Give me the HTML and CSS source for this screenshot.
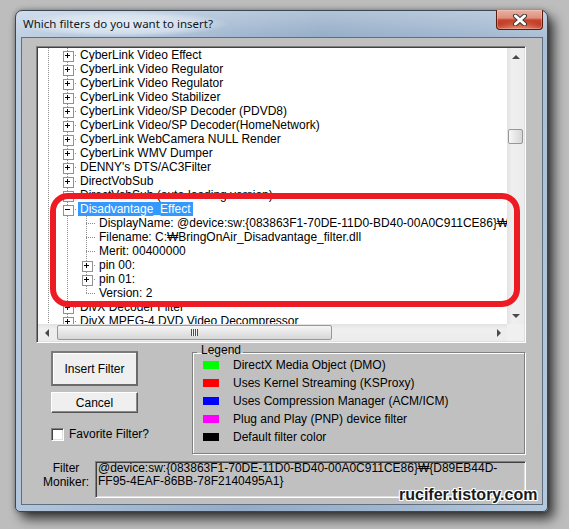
FILE: index.html
```html
<!DOCTYPE html>
<html>
<head>
<meta charset="utf-8">
<title>Which filters do you want to insert?</title>
<link rel="stylesheet" href="styles.css">
</head>
<body>
<div class="window">
  <div class="titlebar">
    <span class="title">Which filters do you want to insert?</span>
    <div class="close">
      <svg width="16" height="12" viewBox="0 0 16 12">
        <path d="M3.5 2 L12.5 10 M12.5 2 L3.5 10" stroke="#3a3a3a" stroke-width="5" stroke-linecap="round"/>
        <path d="M3.5 2 L12.5 10 M12.5 2 L3.5 10" stroke="#fff" stroke-width="3" stroke-linecap="round"/>
      </svg>
    </div>
  </div>
  <div class="client">
    <div class="tree">
      <div class="rows">
        <div class="row"><span class="c v"></span><span class="c t p"></span><span class="txt">CyberLink Video Effect</span></div>
        <div class="row"><span class="c v"></span><span class="c t p"></span><span class="txt">CyberLink Video Regulator</span></div>
        <div class="row"><span class="c v"></span><span class="c t p"></span><span class="txt">CyberLink Video Regulator</span></div>
        <div class="row"><span class="c v"></span><span class="c t p"></span><span class="txt">CyberLink Video Stabilizer</span></div>
        <div class="row"><span class="c v"></span><span class="c t p"></span><span class="txt">CyberLink Video/SP Decoder (PDVD8)</span></div>
        <div class="row"><span class="c v"></span><span class="c t p"></span><span class="txt">CyberLink Video/SP Decoder(HomeNetwork)</span></div>
        <div class="row"><span class="c v"></span><span class="c t p"></span><span class="txt">CyberLink WebCamera NULL Render</span></div>
        <div class="row"><span class="c v"></span><span class="c t p"></span><span class="txt">CyberLink WMV Dumper</span></div>
        <div class="row"><span class="c v"></span><span class="c t p"></span><span class="txt">DENNY's DTS/AC3Filter</span></div>
        <div class="row"><span class="c v"></span><span class="c t p"></span><span class="txt">DirectVobSub</span></div>
        <div class="row"><span class="c v"></span><span class="c t p"></span><span class="txt">DirectVobSub (auto-loading version)</span></div>
        <div class="row"><span class="c v"></span><span class="c t m"></span><span class="txt sel">Disadvantage_Effect</span></div>
        <div class="row"><span class="c v"></span><span class="c v"></span><span class="c t"></span><span class="txt">DisplayName: @device:sw:{083863F1-70DE-11D0-BD40-00A0C911CE86}₩{D89EB44D-FF95-4EAF-86BB-78F2140495A1}</span></div>
        <div class="row"><span class="c v"></span><span class="c v"></span><span class="c t"></span><span class="txt">Filename: C:₩BringOnAir_Disadvantage_filter.dll</span></div>
        <div class="row"><span class="c v"></span><span class="c v"></span><span class="c t"></span><span class="txt">Merit: 00400000</span></div>
        <div class="row"><span class="c v"></span><span class="c v"></span><span class="c t p"></span><span class="txt">pin 00:</span></div>
        <div class="row"><span class="c v"></span><span class="c v"></span><span class="c t p"></span><span class="txt">pin 01:</span></div>
        <div class="row"><span class="c v"></span><span class="c v"></span><span class="c l"></span><span class="txt">Version: 2</span></div>
        <div class="row"><span class="c v"></span><span class="c t p"></span><span class="txt">DivX Decoder Filter</span></div>
        <div class="row"><span class="c v"></span><span class="c t p"></span><span class="txt">DivX MPEG-4 DVD Video Decompressor</span></div>
      </div>
      <div class="vscroll">
        <span class="sbtn"><i class="ar up"></i></span>
        <span class="vthumb"></span>
        <span class="sbtn end"><i class="ar down"></i></span>
      </div>
      <div class="hscroll">
        <span class="sbtn"><i class="ar left"></i></span>
        <span class="hthumb"><i class="grip"></i></span>
        <span class="sbtn end"><i class="ar right"></i></span>
      </div>
      <div class="corner"></div>
      <div class="annot"></div>
    </div>

    <div class="middle">
      <div class="actions">
        <button class="btn default">Insert Filter</button>
        <button class="btn cancel">Cancel</button>
        <label class="fav"><span class="check"></span>Favorite Filter?</label>
      </div>
      <fieldset class="legend-box">
        <legend>Legend</legend>
        <div class="legend-list">
          <div class="li"><span class="sw green"></span>DirectX Media Object (DMO)</div>
          <div class="li"><span class="sw red"></span>Uses Kernel Streaming (KSProxy)</div>
          <div class="li"><span class="sw blue"></span>Uses Compression Manager (ACM/ICM)</div>
          <div class="li"><span class="sw magenta"></span>Plug and Play (PNP) device filter</div>
          <div class="li"><span class="sw black"></span>Default filter color</div>
        </div>
      </fieldset>
    </div>

    <div class="moniker-row">
      <div class="moniker-label">Filter<br>Moniker:</div>
      <div class="moniker-box">@device:sw:{083863F1-70DE-11D0-BD40-00A0C911CE86}₩{D89EB44D-<br>FF95-4EAF-86BB-78F2140495A1}</div>
    </div>
  </div>
</div>
<div class="watermark">rucifer.tistory.com</div>
</body>
</html>
```

FILE: styles.css
```css
* { box-sizing: border-box; }
html, body { margin: 0; height: 100%; }
body {
  background: #bdbdbd;
  font-family: "Liberation Sans", Arial, "Noto Sans CJK KR", sans-serif;
  font-size: 12px;
  color: #000;
  position: relative;
  overflow: hidden;
  padding: 10px 0 0 15px;
}

/* ---------- window frame ---------- */
.window {
  width: 533px;
  height: 502px;
  border: 1px solid #3a4757;
  border-radius: 7px 7px 5px 5px;
  padding: 0 4px 6px 5px;
  display: flex;
  flex-direction: column;
  background:
    linear-gradient(to bottom, rgba(255,255,255,.28), rgba(255,255,255,0) 28px),
    linear-gradient(100deg, #bfd0e3 0%, #a9bed6 25%, #94acc7 50%, #a0b6cf 75%, #b5c9de 100%);
  box-shadow: 0 0 5px rgba(0,0,0,.35), 6px 7px 12px rgba(0,0,0,.7);
}
.titlebar {
  height: 26px;
  flex: none;
  display: flex;
  justify-content: space-between;
  align-items: flex-start;
}
.title {
  margin-left: -4px;
  padding: 0 16px 0 6px;
  line-height: 26px;
  font-family: "Noto Sans", "Open Sans", sans-serif;
  font-size: 11.5px;
  color: #0c1620;
  background: radial-gradient(closest-side, rgba(236,243,250,.85), rgba(236,243,250,.5) 70%, rgba(236,243,250,0));
}
.close {
  width: 47px;
  height: 20px;
  margin-top: -1px;
  border: 1px solid #5a1a10;
  border-top: 0;
  border-radius: 0 0 4px 4px;
  display: flex;
  align-items: center;
  justify-content: center;
  background:
    radial-gradient(ellipse 60% 45% at 50% 100%, rgba(240,150,120,.8), rgba(240,150,120,0)),
    linear-gradient(to bottom, #eab0a2 0%, #de907d 42%, #c9462f 52%, #bd3820 78%, #c9533b 100%);
  box-shadow: inset 0 0 0 1px rgba(255,220,210,.35);
}

/* ---------- client area ---------- */
.client {
  flex: 1;
  border: 1px solid #5f6f82;
  background: #c0c0c0;
  padding: 8px 0 0 14px;
}

/* tree view */
.tree {
  position: relative;
  width: 490px;
  height: 297px;
  border: 1px solid;
  border-color: #808080 #fff #fff #808080;
  box-shadow: inset 1px 1px 0 #404040, inset -1px -1px 0 #dfdfdf;
  padding: 1px;
  background: #fff;
  display: grid;
  grid-template-columns: 469px 17px;
  grid-template-rows: 276px 17px;
}
.rows {
  overflow: hidden;
  padding-left: 1px;
  background: #fff;
}
.row {
  display: flex;
  height: 14px;
  line-height: 14px;
  white-space: nowrap;
}
.c {
  --vd: repeating-linear-gradient(to bottom, #8c8c8c 0 1px, transparent 1px 2px);
  --hd: repeating-linear-gradient(to right, #8c8c8c 0 1px, transparent 1px 2px);
  flex: none;
  width: 19px;
  height: 14px;
  position: relative;
  background-repeat: no-repeat;
}
.v { background-image: var(--vd); background-size: 1px 14px; background-position: 9px 0; }
.t { background-image: var(--vd), var(--hd); background-size: 1px 14px, 10px 1px; background-position: 9px 0, 9px 7px; }
.l { background-image: var(--vd), var(--hd); background-size: 1px 8px, 10px 1px; background-position: 9px 0, 9px 7px; }
.p::after, .m::after {
  content: "";
  position: absolute;
  left: 5px;
  top: 3px;
  width: 9px;
  height: 9px;
  border: 1px solid #919191;
}
.p::after {
  background:
    linear-gradient(#000, #000) 1px 3px / 5px 1px no-repeat,
    linear-gradient(#000, #000) 3px 1px / 1px 5px no-repeat,
    #fff;
}
.m::after {
  background: linear-gradient(#000, #000) 1px 3px / 5px 1px no-repeat, #fff;
}
.txt { margin-left: 1px; padding: 0 2px; }
.txt.sel { background: #3399ff; color: #fff; }

/* scrollbars */
.vscroll {
  display: flex;
  flex-direction: column;
  background: linear-gradient(to right, #e2e2e2, #efefef 30%, #ececec);
}
.hscroll {
  display: flex;
  background: linear-gradient(to bottom, #e2e2e2, #efefef 30%, #ececec);
}
.corner { background: #f0f0f0; }
.sbtn {
  flex: none;
  width: 17px;
  height: 17px;
  display: flex;
  align-items: center;
  justify-content: center;
}
.sbtn.end { margin-top: auto; margin-left: auto; }
.hscroll .sbtn.end { margin-top: 0; }
.vscroll .sbtn.end { margin-left: 0; }
.ar { display: block; width: 0; height: 0; border: 4px solid transparent; }
.ar.up { border-bottom-color: #4a4a4a; border-top-width: 0; }
.ar.down { border-top-color: #4a4a4a; border-bottom-width: 0; }
.ar.left { border-right-color: #4a4a4a; border-left-width: 0; }
.ar.right { border-left-color: #4a4a4a; border-right-width: 0; }
.vthumb {
  flex: none;
  width: 15px;
  height: 15px;
  margin: 64px 1px 0;
  border: 1px solid #979797;
  border-radius: 2px;
  background: linear-gradient(to right, #f6f6f6, #e6e6e6 50%, #d6d6d6);
}
.hthumb {
  flex: none;
  width: 275px;
  height: 15px;
  margin: 1px 0 0 2px;
  border: 1px solid #979797;
  border-radius: 2px;
  background: linear-gradient(to bottom, #f6f6f6, #e6e6e6 50%, #d6d6d6);
  display: flex;
  align-items: center;
  justify-content: center;
}
.grip {
  display: block;
  width: 7px;
  height: 7px;
  background: repeating-linear-gradient(to right, #4d4d4d 0 1px, #f6f6f6 1px 2px);
}

/* annotation (drawn over the tree) */
.annot {
  position: absolute;
  left: 13px;
  top: 146px;
  width: 470px;
  height: 114px;
  border: 6px solid #ed1c24;
  border-radius: 18px;
  pointer-events: none;
}

/* ---------- middle: buttons + legend ---------- */
.middle {
  display: flex;
  margin-top: 1px;
  padding-left: 15px;
}
.actions {
  width: 87px;
  flex: none;
  padding-top: 7px;
  display: flex;
  flex-direction: column;
}
.btn {
  font: 12px "Liberation Sans", Arial, sans-serif;
  color: #000;
  background: #efefef;
  width: 87px;
  padding: 0;
  margin: 0;
}
.btn.default {
  height: 35px;
  border: 2px solid #6a6a6a;
  border-top-color: #7a7a7a;
  border-left-color: #7a7a7a;
  box-shadow: inset 1px 1px 0 #fff;
}
.btn.cancel {
  height: 21px;
  margin-top: 6px;
  border: 1px solid;
  border-color: #fff #555 #555 #fff;
  box-shadow: inset -1px -1px 0 #8a8a8a;
}
.fav {
  display: flex;
  align-items: center;
  margin-top: 15px;
  height: 13px;
  line-height: 13px;
  white-space: nowrap;
}
.check {
  flex: none;
  width: 13px;
  height: 13px;
  margin-right: 5px;
  background: #fff;
  border: 1px solid;
  border-color: #808080 #fff #fff #808080;
  box-shadow: inset 1px 1px 0 #404040, inset -1px -1px 0 #dfdfdf;
}
.legend-box {
  margin: 0 0 0 54px;
  padding: 0 0 0 4px;
  width: 333px;
  height: 110px;
  min-width: 0;
  border: 1px solid #808080;
  box-shadow: 1px 1px 0 #fff, inset 1px 1px 0 #fff;
}
.legend-box legend {
  padding: 0 2px 4px 4px;
  font-size: 12px;
  line-height: 12px;
}
.legend-list { margin: -4px 0 0 6px; }
.li {
  display: flex;
  align-items: center;
  height: 18px;
  white-space: nowrap;
}
.sw { width: 16px; height: 8px; margin-right: 14px; flex: none; }
.green { background: #00ff00; }
.red { background: #ff0000; }
.blue { background: #0000ff; }
.magenta { background: #ff00ff; }
.black { background: #000; }

/* ---------- moniker ---------- */
.moniker-row {
  display: flex;
  margin-top: 7px;
  padding-left: 2px;
}
.moniker-label {
  width: 56px;
  text-align: center;
  line-height: 14px;
}
.moniker-box {
  margin-left: 1px;
  width: 431px;
  height: 37px;
  border: 1px solid;
  border-color: #808080 #fff #fff #808080;
  box-shadow: inset 1px 1px 0 #404040, inset -1px -1px 0 #dfdfdf;
  padding: 0 0 0 2px;
  line-height: 13px;
  white-space: nowrap;
  overflow: hidden;
}

/* ---------- watermark ---------- */
.watermark {
  position: absolute;
  left: 399px;
  top: 486px;
  font: bold 16px/18px "Liberation Sans", Arial, sans-serif;
  color: #1a1a1a;
  text-shadow: -1px -1px 0 #fff, 1px -1px 0 #fff, -1px 1px 0 #fff, 1px 1px 0 #fff, 0 0 2px #fff;
}
```
